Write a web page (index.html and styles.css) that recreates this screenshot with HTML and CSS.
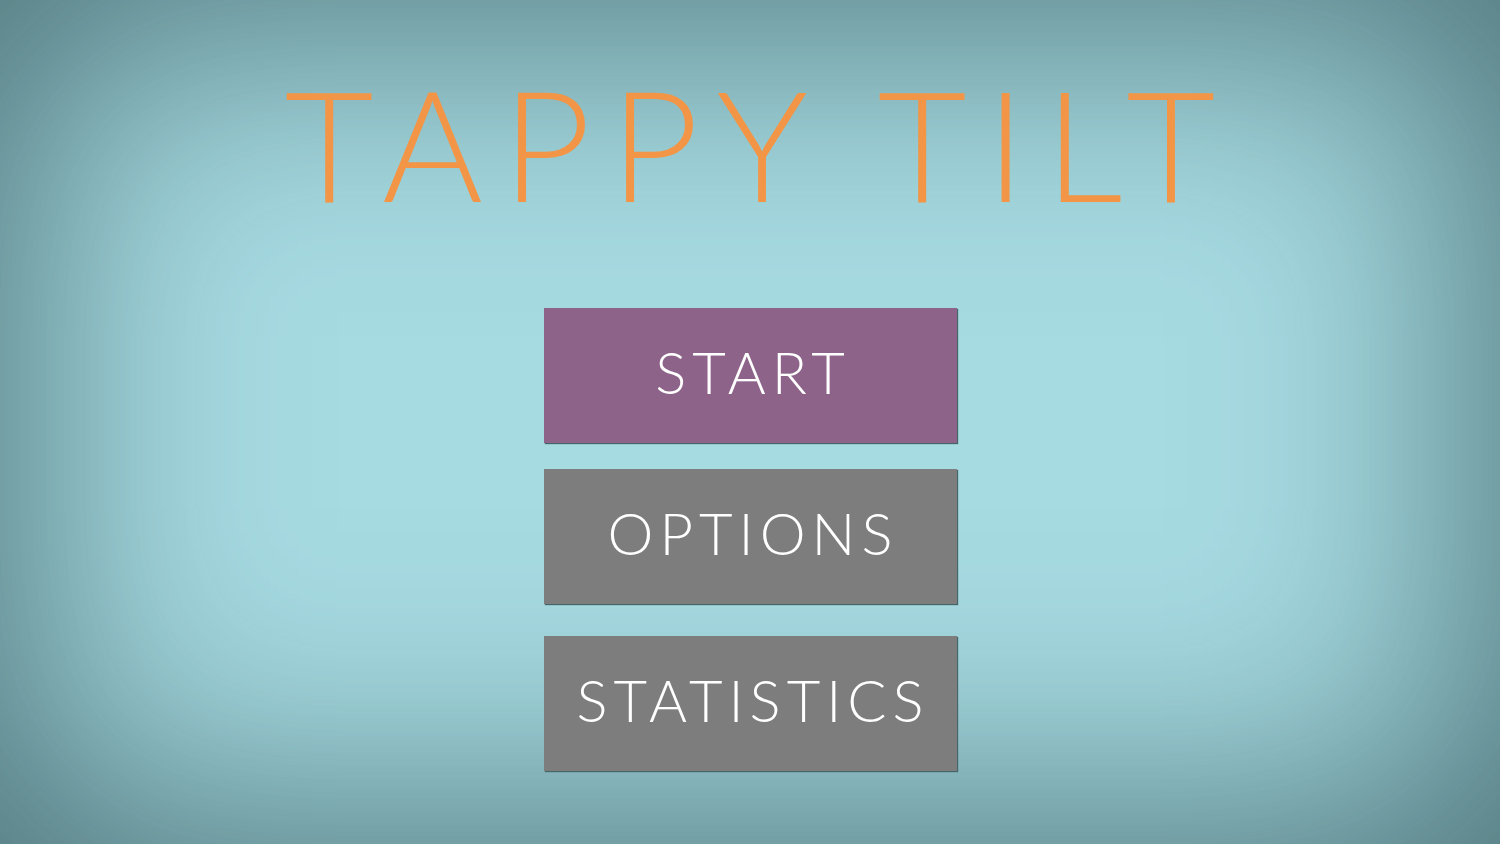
FILE: index.html
```html
<!DOCTYPE html>
<html>
<head>
<meta charset="utf-8">
<link rel="stylesheet" href="styles.css">
</head>
<body>
<div class="screen">
  <h1 class="title">TAPPY TILT</h1>
  <nav class="menu">
    <div class="btn btn-start">START</div>
    <div class="btn btn-options">OPTIONS</div>
    <div class="btn btn-stats">STATISTICS</div>
  </nav>
</div>
</body>
</html>
```
FILE: styles.css
```css
html, body {
  margin: 0;
  padding: 0;
  width: 1500px;
  height: 844px;
  overflow: hidden;
}
.screen {
  width: 1500px;
  height: 844px;
  box-sizing: border-box;
  background: #a7dbe2;
  box-shadow: inset 0 0 260px 30px rgba(55, 90, 95, 0.8);
  display: flex;
  flex-direction: column;
  align-items: center;
  font-family: "Lato", "Roboto", sans-serif;
}
.title {
  margin: 66px 0 0 0;
  padding-left: 19px;
  font-size: 154px;
  line-height: 154px;
  font-weight: 300;
  color: #f39546;
  letter-spacing: 19px;
  white-space: nowrap;
}
.menu {
  margin-top: 88px;
  display: flex;
  flex-direction: column;
  align-items: center;
}
.btn {
  width: 413px;
  height: 135px;
  box-sizing: border-box;
  padding: 0 0 8px 6px;
  display: flex;
  align-items: center;
  justify-content: center;
  color: #ffffff;
  font-size: 58px;
  font-weight: 300;
  letter-spacing: 6px;
  box-shadow: 1px 1px 1px #456669;
}
.btn-start { background: #8e6389; }
.btn-options { background: #7d7d7d; margin-top: 26px; }
.btn-stats { background: #7d7d7d; margin-top: 32px; }
```
